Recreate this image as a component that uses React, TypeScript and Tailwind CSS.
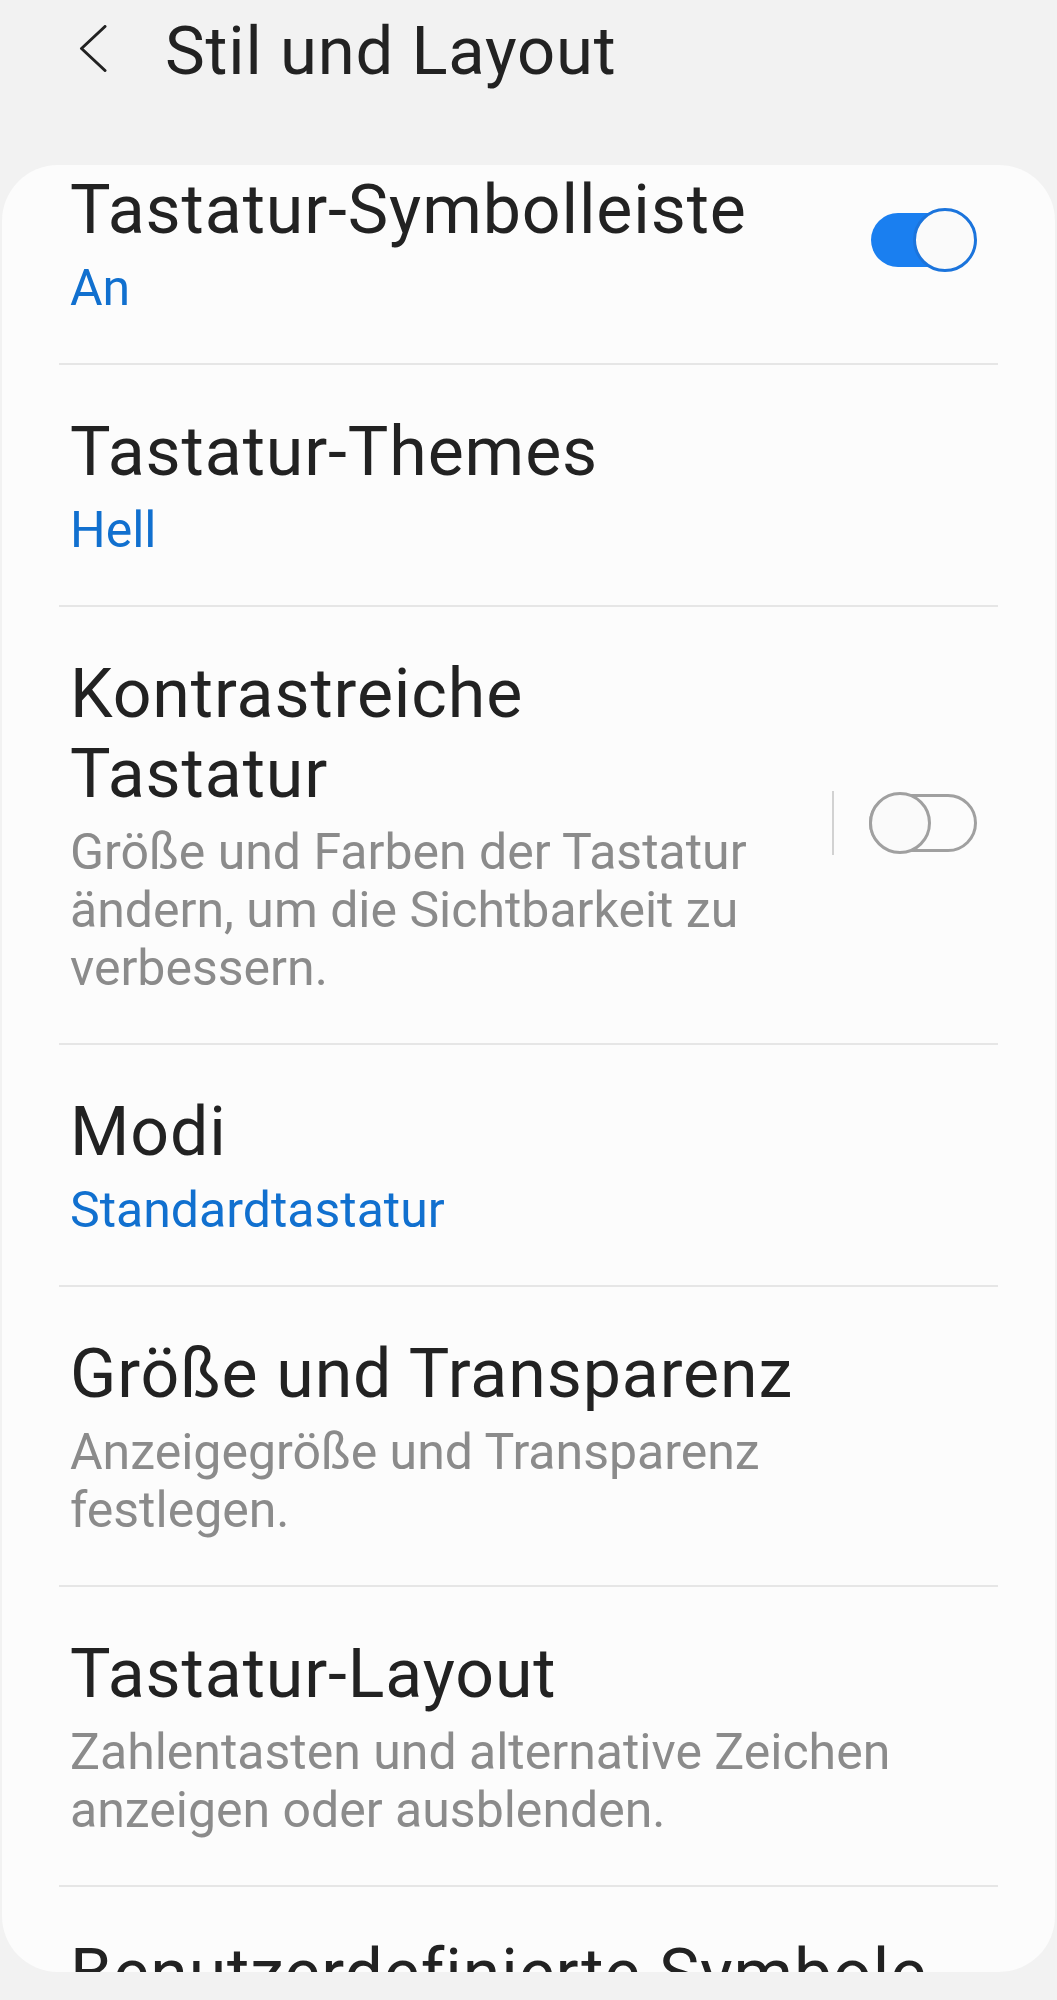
import React from "react";

type Row = {
  title: React.ReactNode;
  sub?: React.ReactNode;
  subBlue?: boolean;
  toggle?: "on" | "off";
  divider?: boolean;
  first?: boolean;
};

const rows: Row[] = [
  { title: "Tastatur-Symbolleiste", sub: "An", subBlue: true, toggle: "on", first: true },
  { title: "Tastatur-Themes", sub: "Hell", subBlue: true },
  {
    title: (
      <>
        Kontrastreiche
        <br />
        Tastatur
      </>
    ),
    sub: (
      <>
        Größe und Farben der Tastatur
        <br />
        ändern, um die Sichtbarkeit zu
        <br />
        verbessern.
      </>
    ),
    toggle: "off",
    divider: true,
  },
  { title: "Modi", sub: "Standardtastatur", subBlue: true },
  {
    title: "Größe und Transparenz",
    sub: (
      <>
        Anzeigegröße und Transparenz
        <br />
        festlegen.
      </>
    ),
  },
  {
    title: "Tastatur-Layout",
    sub: (
      <>
        Zahlentasten und alternative Zeichen
        <br />
        anzeigen oder ausblenden.
      </>
    ),
  },
  { title: "Benutzerdefinierte Symbole", sub: "" },
];

const Toggle = ({ on }: { on: boolean }) =>
  on ? (
    <div className="relative w-[106px] h-[64px] mb-[8px] flex items-center">
      <div className="w-[100px] h-[54px] rounded-full bg-[#1a7ff0]" />
      <div className="absolute right-0 top-0 w-[64px] h-[64px] rounded-full border-[3px] border-[#1b74dc] bg-[#fafafa]" />
    </div>
  ) : (
    <div className="relative w-[108px] h-[64px] mb-[6px] flex items-center">
      <div className="w-[108px] h-[58px] rounded-full border-[3px] border-[#a0a0a0]" />
      <div className="absolute left-0 top-[1px] w-[62px] h-[62px] rounded-full border-[3px] border-[#a0a0a0] bg-[#fafafa]" />
    </div>
  );

export default function App() {
  return (
    <div
      className="h-[2000px] overflow-hidden bg-[#f2f2f2]"
      style={{ fontFamily: "Roboto, 'Noto Sans', sans-serif" }}
    >
      {/* header */}
      <div className="h-[165px] flex items-start pt-[11px]">
        <svg
          className="ml-[79px] mt-[14px]"
          width="28"
          height="47"
          viewBox="0 0 28 47"
          fill="none"
          stroke="#222"
          strokeWidth="3"
          strokeLinecap="round"
          strokeLinejoin="round"
        >
          <path d="M26 1.5 L2.5 23.5 L26 45.5" />
        </svg>
        <h1 className="ml-[58px] text-[67px] leading-[80px] tracking-[0.8px] text-[#222] font-normal">
          Stil und Layout
        </h1>
      </div>

      {/* card */}
      <div className="mx-[2px] h-[1807px] overflow-hidden rounded-[56px] bg-[#fcfcfc] px-[57px]">
        {rows.map((r, i) => (
          <div key={i} className={i > 0 ? "border-t-2 border-[#e6e6e6]" : ""}>
            <div
              className={`flex items-center pl-[11px] pr-[21px] pb-[46px] ${
                r.first ? "pt-[5px]" : "pt-[47px]"
              }`}
            >
              <div className="flex-1">
                <div className="text-[68px] leading-[80px] tracking-[0.9px] text-[#222]">
                  {r.title}
                </div>
                {r.sub ? (
                  <div
                    className={`mt-[9px] text-[50px] leading-[58px] ${
                      r.subBlue ? "text-[#1170cf]" : "text-[#8b8b8b]"
                    }`}
                  >
                    {r.sub}
                  </div>
                ) : null}
              </div>
              {r.divider ? (
                <div className="w-[2px] h-[64px] mb-[6px] bg-[#d2d2d2] mr-[35px]" />
              ) : null}
              {r.toggle ? <Toggle on={r.toggle === "on"} /> : null}
            </div>
          </div>
        ))}
      </div>
    </div>
  );
}
